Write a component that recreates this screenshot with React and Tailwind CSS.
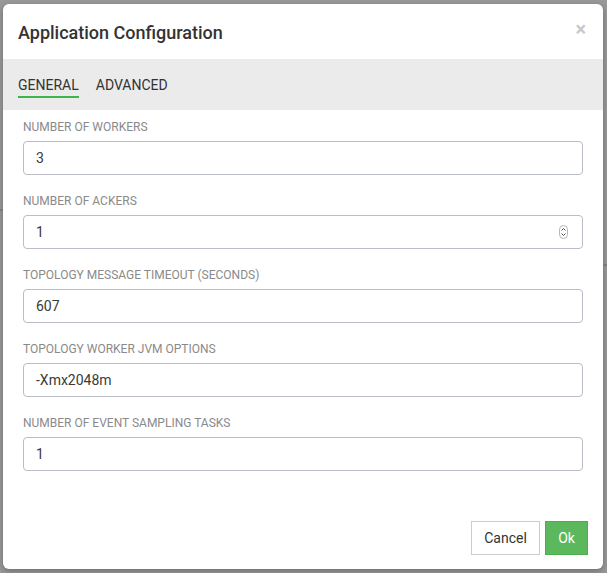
import React from "react";

const fields = [
  { label: "NUMBER OF WORKERS", value: "3" },
  { label: "NUMBER OF ACKERS", value: "1", spinner: true },
  { label: "TOPOLOGY MESSAGE TIMEOUT (SECONDS)", value: "607" },
  { label: "TOPOLOGY WORKER JVM OPTIONS", value: "-Xmx2048m" },
  { label: "NUMBER OF EVENT SAMPLING TASKS", value: "1" },
];

function Spinner() {
  return (
    <svg width="9" height="14" viewBox="0 0 9 14" className="absolute right-[14px] top-[9px]">
      <rect x="0.5" y="0.5" width="8" height="13" rx="4" fill="#fff" stroke="#b5b5b5" />
      <path d="M2.5 5.5 L4.5 3.5 L6.5 5.5" fill="none" stroke="#555" strokeWidth="1" />
      <path d="M2.5 8.5 L4.5 10.5 L6.5 8.5" fill="none" stroke="#555" strokeWidth="1" />
    </svg>
  );
}

export default function App() {
  return (
    <div
      className="relative w-[607px] h-[573px] bg-[#999999] overflow-hidden pt-[4px] pl-[3px]"
      style={{ fontFamily: "Roboto, 'Noto Sans', sans-serif" }}
    >
      <div className="absolute left-0 top-[209px] w-[3px] h-[2px] bg-[#7a7a7a]" />
      <div className="absolute right-0 top-[264px] w-[4px] h-[2px] bg-[#7a7a7a]" />
      <div className="w-[600px] h-[565px] bg-white rounded-[6px] shadow-[0_2px_6px_rgba(0,0,0,0.3)] flex flex-col overflow-hidden">
        <div className="h-[55px] flex items-center justify-between pl-[15px] pr-[17px] shrink-0">
          <span className="text-[18px] font-medium text-[#333333] pt-[1px]">Application Configuration</span>
          <span className="text-[#c8c8c8] text-[20px] font-bold leading-none -mt-[6px]">×</span>
        </div>
        <div className="h-[51px] bg-[#ebebeb] flex items-start pl-[15px] gap-[17px] shrink-0 pt-[18px]">
          <div className="flex flex-col">
            <span className="text-[14px] leading-[16px] text-[#333333]">GENERAL</span>
            <div className="h-[2px] bg-[#3cb54a] mt-[3px]" />
          </div>
          <span className="text-[14px] leading-[16px] text-[#333333]">ADVANCED</span>
        </div>
        <div className="flex-1 px-[20px] pt-[9px]">
          {fields.map((f) => (
            <div key={f.label} className="mb-[18px]">
              <div className="text-[12px] leading-[16px] text-[#8a8a8a] mb-[6px]">{f.label}</div>
              <div className="relative h-[34px] w-[560px] border border-[#b9bdc6] rounded-[4px] flex items-center pl-[12px] text-[14px] text-[#3a3a3a]">
                {f.value}
                {f.spinner && <Spinner />}
              </div>
            </div>
          ))}
        </div>
        <div className="flex justify-end gap-[5px] pr-[15px] pb-[14px] shrink-0">
          <button className="h-[34px] w-[69px] border border-[#cccccc] bg-white text-[14px] text-[#333333]">Cancel</button>
          <button className="h-[34px] w-[43px] bg-[#5cb85c] border border-[#4cae4c] text-[14px] text-white">Ok</button>
        </div>
      </div>
    </div>
  );
}
